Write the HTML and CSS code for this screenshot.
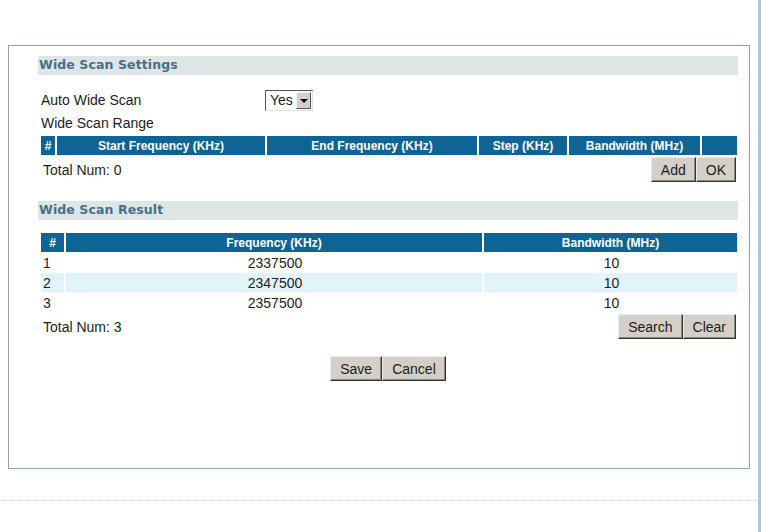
FILE: index.html
```html
<!DOCTYPE html>
<html lang="en">
<head>
    <meta charset="UTF-8">
    <title>Wide Scan</title>
    <link rel="stylesheet" href="styles.css">
</head>
<body>
    <div class="page">
        <div class="panel">
            <h3 class="title">Wide Scan Settings</h3>

            <div class="field-row">
                <span>Auto Wide Scan</span>
                <span class="select">
                    <span class="select-value">Yes</span>
                    <span class="select-arrow"></span>
                </span>
            </div>
            <div class="field-row">
                <span>Wide Scan Range</span>
            </div>

            <table class="grid">
                <tr>
                    <th class="c-num">#</th>
                    <th class="c-start">Start Frequency (KHz)</th>
                    <th class="c-end">End Frequency (KHz)</th>
                    <th class="c-step">Step (KHz)</th>
                    <th class="c-bw">Bandwidth (MHz)</th>
                    <th></th>
                </tr>
            </table>

            <div class="total-row">
                <span>Total Num: 0</span>
                <div class="btn-group">
                    <button class="btn">Add</button>
                    <button class="btn">OK</button>
                </div>
            </div>

            <h3 class="title title-result">Wide Scan Result</h3>

            <table class="grid grid-result">
                <tr>
                    <th class="c-num2">#</th>
                    <th class="c-freq">Frequency (KHz)</th>
                    <th>Bandwidth (MHz)</th>
                </tr>
                <tr>
                    <td>1</td>
                    <td class="center">2337500</td>
                    <td class="center">10</td>
                </tr>
                <tr class="alt">
                    <td>2</td>
                    <td class="center">2347500</td>
                    <td class="center">10</td>
                </tr>
                <tr>
                    <td>3</td>
                    <td class="center">2357500</td>
                    <td class="center">10</td>
                </tr>
            </table>

            <div class="total-row">
                <span>Total Num: 3</span>
                <div class="btn-group">
                    <button class="btn">Search</button>
                    <button class="btn">Clear</button>
                </div>
            </div>

            <div class="actions">
                <button class="btn">Save</button>
                <button class="btn">Cancel</button>
            </div>
        </div>

        <div class="rule"></div>
    </div>
    <div class="edge"></div>
</body>
</html>
```

FILE: styles.css
```css
body {
    margin: 0;
    display: flex;
    height: 100vh;
    overflow: hidden;
    background-color: #fff;
    color: #1c1c1c;
    font-family: "Liberation Sans", Arial, sans-serif;
    font-size: 14px;
}

.page {
    flex: 1;
}

.edge {
    width: 3px;
    background-color: #a9c9e3;
}

.panel {
    box-sizing: border-box;
    width: 742px;
    height: 424px;
    margin: 45px 0 0 8px;
    padding: 10px 0 0 29px;
    border: 1px solid #8ea2a9;
}

.title {
    width: 699px;
    height: 19px;
    margin: 0;
    padding-left: 1px;
    background-color: #dee6e5;
    color: #456f8a;
    font-family: "DejaVu Sans", Verdana, sans-serif;
    font-size: 12.5px;
    font-weight: bold;
    letter-spacing: 0.1px;
    line-height: 18px;
}

.field-row {
    display: grid;
    grid-template-columns: 224px auto;
    align-items: center;
    height: 22px;
    padding-left: 3px;
}

.field-row:first-of-type {
    margin-top: 14px;
}

.field-row + .field-row {
    padding-top: 1px;
}

/* fake select box */
.select {
    display: flex;
    box-sizing: border-box;
    width: 48px;
    height: 21px;
    padding: 1px;
    border: 1px solid;
    border-color: #555 #e0e0e0 #e0e0e0 #555;
    background-color: #fff;
}

.select-value {
    flex: 1;
    padding-left: 3px;
    line-height: 17px;
}

.select-arrow {
    position: relative;
    box-sizing: border-box;
    width: 15px;
    border: 1px solid;
    border-color: #f4f4f4 #555 #555 #f4f4f4;
    background-color: #d4d0c8;
}

.select-arrow::after {
    content: "";
    position: absolute;
    left: 3px;
    top: 6px;
    border-left: 4px solid transparent;
    border-right: 4px solid transparent;
    border-top: 4px solid #000;
}

.grid {
    width: 700px;
    margin: 1px 0 0 1px;
    border-collapse: separate;
    border-spacing: 2px 1px;
}

.grid th {
    height: 19px;
    padding: 0;
    background-color: #0f6496;
    color: #fff;
    font-size: 12px;
    font-weight: bold;
    text-align: center;
}

.grid td {
    box-sizing: border-box;
    height: 19px;
    padding: 1px 0 0 2px;
    line-height: 18px;
}

.grid td.center {
    text-align: center;
}

.grid .alt td {
    background-color: #e1f4fa;
}

.c-num { width: 14px; }
.c-start { width: 208px; }
.c-end { width: 210px; }
.c-step { width: 88px; }
.c-bw { width: 131px; }

.c-num2 { width: 23px; }
.c-freq { width: 416px; }

.title-result {
    margin-top: 19px;
}

.grid-result {
    margin-top: 12px;
}

.total-row {
    display: flex;
    justify-content: space-between;
    align-items: center;
    width: 693px;
    margin-top: 1px;
    padding-left: 5px;
}

.btn-group {
    display: flex;
}

.btn {
    height: 25px;
    margin: 0;
    padding: 0 9px;
    border: 1px solid;
    border-color: #ecebe7 #333 #333 #ecebe7;
    box-shadow: inset -1px -1px #8a8782;
    background-color: #d4d0c8;
    color: #1c1c1c;
    font-family: "Liberation Sans", Arial, sans-serif;
    font-size: 14px;
}

.actions {
    display: flex;
    justify-content: center;
    width: 700px;
    margin-top: 17px;
}

.rule {
    width: 757px;
    margin-top: 31px;
    border-top: 1px dotted #d8d8d8;
}
```
